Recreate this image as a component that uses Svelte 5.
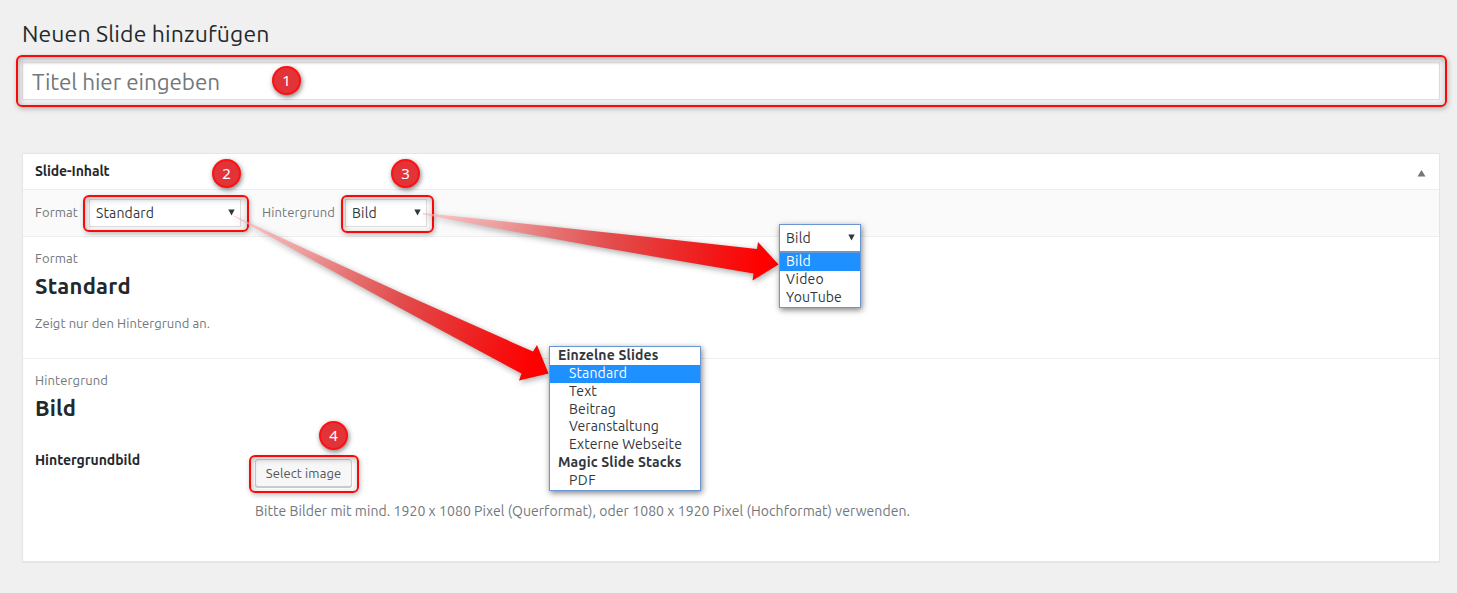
<script>
  const rings = [
    { x: 16, y: 54.5, w: 1430.5, h: 52.5 },
    { x: 83, y: 194.5, w: 165.5, h: 37 },
    { x: 340.5, y: 194.5, w: 93, h: 38 },
    { x: 249, y: 454.5, w: 109.5, h: 38 },
  ];
  const badges = [
    { n: 1, x: 287, y: 81 },
    { n: 2, x: 227, y: 174 },
    { n: 3, x: 406, y: 174 },
    { n: 4, x: 334, y: 436 },
  ];
  const formats = [
    { label: 'Einzelne Slides', group: true, w: 99.5 },
    { label: 'Standard', active: true, w: 57 },
    { label: 'Text', w: 27 },
    { label: 'Beitrag', w: 46 },
    { label: 'Veranstaltung', w: 89 },
    { label: 'Externe Webseite', w: 112 },
    { label: 'Magic Slide Stacks', group: true, w: 122.5 },
    { label: 'PDF', w: 26 },
  ];
  const backgrounds = [
    { label: 'Bild', active: true, w: 24 },
    { label: 'Video', w: 37 },
    { label: 'YouTube', w: 55 },
  ];

  // Spreads the letters evenly so that the label takes the given width.
  function fit(node, width) {
    const natural = node.getBoundingClientRect().width;
    node.style.letterSpacing = `${(width - natural) / node.textContent.length}px`;
  }
</script>

<main>
  <h1><span use:fit={247.5}>Neuen Slide hinzufügen</span></h1>
  <div class="title-field"><span use:fit={188}>Titel hier eingeben</span></div>

  <section class="panel">
    <header>
      <h2><span use:fit={74.5}>Slide-Inhalt</span></h2>
      <svg width="9" height="7" viewBox="0 0 9 7"><path d="M4.5 0 8.5 6.5H.5Z" fill="#72777c" /></svg>
    </header>
    <div class="toolbar">
      <span class="label" use:fit={43}>Format</span>
      <div class="select wide">
        <span use:fit={58}>Standard</span>
        <svg width="7" height="7" viewBox="0 0 7 7"><path d="M.3 .5H6.7L3.5 6.5Z" fill="#32373c" /></svg>
      </div>
      <span class="label second" use:fit={73}>Hintergrund</span>
      <div class="select">
        <span use:fit={25}>Bild</span>
        <svg width="7" height="7" viewBox="0 0 7 7"><path d="M.3 .5H6.7L3.5 6.5Z" fill="#32373c" /></svg>
      </div>
    </div>
    <div class="block format">
      <p><span use:fit={43}>Format</span></p>
      <h3><span use:fit={96}>Standard</span></h3>
      <p class="info"><span use:fit={175}>Zeigt nur den Hintergrund an.</span></p>
    </div>
    <div class="block background">
      <p><span use:fit={73}>Hintergrund</span></p>
      <h3><span use:fit={41}>Bild</span></h3>
      <div class="field">
        <strong><span use:fit={105}>Hintergrundbild</span></strong>
        <div>
          <button><span use:fit={75.5}>Select image</span></button>
          <p class="hint"><span use:fit={655}>Bitte Bilder mit mind. 1920 x 1080 Pixel (Querformat), oder 1080 x 1920 Pixel (Hochformat) verwenden.</span></p>
        </div>
      </div>
    </div>
  </section>

  {#each rings as r}
    <div class="ring" style="left:{r.x}px;top:{r.y}px;width:{r.w}px;height:{r.h}px"></div>
  {/each}

  <svg class="arrows" width="1457" height="593" viewBox="0 0 1457 593">
    <defs>
      <linearGradient id="fade-a" gradientUnits="userSpaceOnUse" x1="234" y1="217" x2="548" y2="374">
        <stop offset="0" stop-color="#ffb0b0" stop-opacity=".6" />
        <stop offset=".2" stop-color="#f29c9c" stop-opacity=".9" />
        <stop offset=".36" stop-color="#e67474" />
        <stop offset=".53" stop-color="#e24c4c" />
        <stop offset=".78" stop-color="#ef1e1e" />
        <stop offset=".95" stop-color="#ff0000" />
      </linearGradient>
      <linearGradient id="fade-b" gradientUnits="userSpaceOnUse" x1="423" y1="213" x2="779" y2="265">
        <stop offset="0" stop-color="#ffb0b0" stop-opacity=".6" />
        <stop offset=".2" stop-color="#f29c9c" stop-opacity=".9" />
        <stop offset=".36" stop-color="#e67474" />
        <stop offset=".53" stop-color="#e24c4c" />
        <stop offset=".78" stop-color="#ef1e1e" />
        <stop offset=".95" stop-color="#ff0000" />
      </linearGradient>
    </defs>
    <path d="M234 215.500 Q383 286 533 351.500L537 345 548.500 373.500 519 380.500 521.500 373.500Q378 297 234 216.500Z" fill="url(#fade-a)" />
    <path d="M423 213Q590 230 757 249L758 242 778.500 264.500 752.500 280.500 753.500 273.500Q588 246 423 214.500Z" fill="url(#fade-b)" />
  </svg>

  {#each badges as b}
    <div class="badge" style="left:{b.x - 15}px;top:{b.y - 15}px">{b.n}</div>
  {/each}

  <div class="menu formats">
    {#each formats as f}
      <div class="row" class:group={f.group} class:active={f.active}><span use:fit={f.w + 1}>{f.label}</span></div>
    {/each}
  </div>

  <div class="menu backgrounds">
    <div class="current">
      <span use:fit={25}>Bild</span>
      <svg width="7" height="7" viewBox="0 0 7 7"><path d="M.3 .5H6.7L3.5 6.5Z" fill="#32373c" /></svg>
    </div>
    {#each backgrounds as f}
      <div class="row" class:active={f.active}><span use:fit={f.w + 1}>{f.label}</span></div>
    {/each}
  </div>
</main>

<style>
  :global(body) { background: #f1f1f1; }
  main {
    position: relative;
    box-sizing: border-box;
    width: 1457px;
    height: 593px;
    padding: 18px 17px 0 22px;
    overflow: hidden;
    background: #f0f0f0;
    color: #72777c;
    font: 13px/18px Ubuntu, "Noto Sans", sans-serif;
    white-space: nowrap;
  }
  h1, h2, h3, p { margin: 0; font-weight: 400; }
  h1 { height: 44px; color: #23282d; font-size: 23px; line-height: 32px; }
  .title-field {
    box-sizing: border-box;
    height: 38px;
    padding: 0 9px;
    border: 1px solid #ddd;
    background: #fff;
    box-shadow: inset 0 1px 2px rgba(0, 0, 0, .07);
    color: #72777c;
    font-size: 22.5px;
    line-height: 37px;
  }
  .panel {
    box-sizing: border-box;
    height: 409px;
    margin-top: 53px;
    border: 1px solid #e5e5e5;
    background: #fff;
    box-shadow: 0 1px 1px rgba(0, 0, 0, .04);
  }
  header {
    display: flex;
    align-items: center;
    justify-content: space-between;
    box-sizing: border-box;
    height: 36px;
    padding: 0 13px 0 12px;
    border-bottom: 1px solid #eee;
  }
  header svg { margin-top: 4px; }
  h2 { margin-bottom: 2px; color: #23282d; font-size: 14px; font-weight: 600; }
  .toolbar {
    display: flex;
    align-items: center;
    box-sizing: border-box;
    height: 47px;
    padding-left: 12px;
    border-bottom: 1px solid #eee;
    background: #fafafa;
  }
  .label { margin-bottom: 2px; }
  .second { margin-left: 21px; }
  .select {
    display: flex;
    align-items: center;
    justify-content: space-between;
    box-sizing: border-box;
    width: 82px;
    height: 28px;
    margin-left: 10px;
    padding: 0 5px 0 6px;
    border: 1px solid #ddd;
    background: #fff;
    color: #32373c;
    font-size: 14px;
  }
  .select svg, .current svg { margin-bottom: 2px; }
  .select.wide { width: 152px; margin-left: 11px; }
  .block { box-sizing: border-box; padding: 12px 12px 0; }
  .format { height: 122px; border-bottom: 1px solid #eee; }
  h3 { margin-top: 4px; color: #23282d; font-size: 22px; font-weight: 600; line-height: 30px; }
  .info { margin-top: 13px; }
  .field { display: grid; grid-template-columns: 220px 1fr; margin-top: 36px; }
  strong { color: #23282d; font-size: 14px; font-weight: 600; line-height: 20px; margin-top: -9px; }
  button {
    display: flex;
    align-items: center;
    justify-content: center;
    box-sizing: border-box;
    width: 97px;
    height: 28px;
    margin: 0;
    padding: 0;
    border: 1px solid #ccc;
    border-radius: 3px;
    background: #f7f7f7;
    box-shadow: 0 1px 0 #ccc;
    color: #555;
    font: inherit;
  }
  .hint { margin-top: 15px; font-size: 14px; }
  .ring {
    position: absolute;
    box-sizing: border-box;
    border: 2px solid #fb0808;
    border-radius: 6px;
    box-shadow: 1px 2px 5px rgba(0, 0, 0, .25), inset 1px 2px 6px rgba(0, 0, 0, .27);
  }
  .arrows { position: absolute; inset: 0; filter: drop-shadow(1px 2px 3px rgba(0, 0, 0, .35)); }
  .badge {
    position: absolute;
    box-sizing: border-box;
    width: 29px;
    height: 29px;
    border: 2px solid #fc1212;
    border-radius: 50%;
    background: #e13338;
    box-shadow: 1px 2px 5px rgba(0, 0, 0, .5);
    color: #fff;
    font: 15px/25px "Noto Sans", sans-serif;
    text-align: center;
  }
  .menu {
    position: absolute;
    box-sizing: border-box;
    border: 1px solid #6a96d3;
    background: #fff;
    box-shadow: 1px 2px 6px rgba(0, 0, 0, .5);
    color: #32373c;
    font-size: 14px;
  }
  .formats { left: 549px; top: 346px; width: 152px; height: 145px; }
  .formats .row { height: 17.85px; padding-left: 19px; line-height: 17px; }
  .formats .group { padding-left: 8px; font-weight: 700; }
  .backgrounds { left: 779px; top: 224px; width: 82px; height: 84px; }
  .current {
    display: flex;
    align-items: center;
    justify-content: space-between;
    box-sizing: border-box;
    height: 28px;
    padding: 0 5px 0 6px;
    border-bottom: 2px solid #6a96d3;
  }
  .backgrounds .row { height: 18px; padding-left: 6px; line-height: 17px; }
  .row.active { background: #1e90ff; color: #fff; }
</style>
